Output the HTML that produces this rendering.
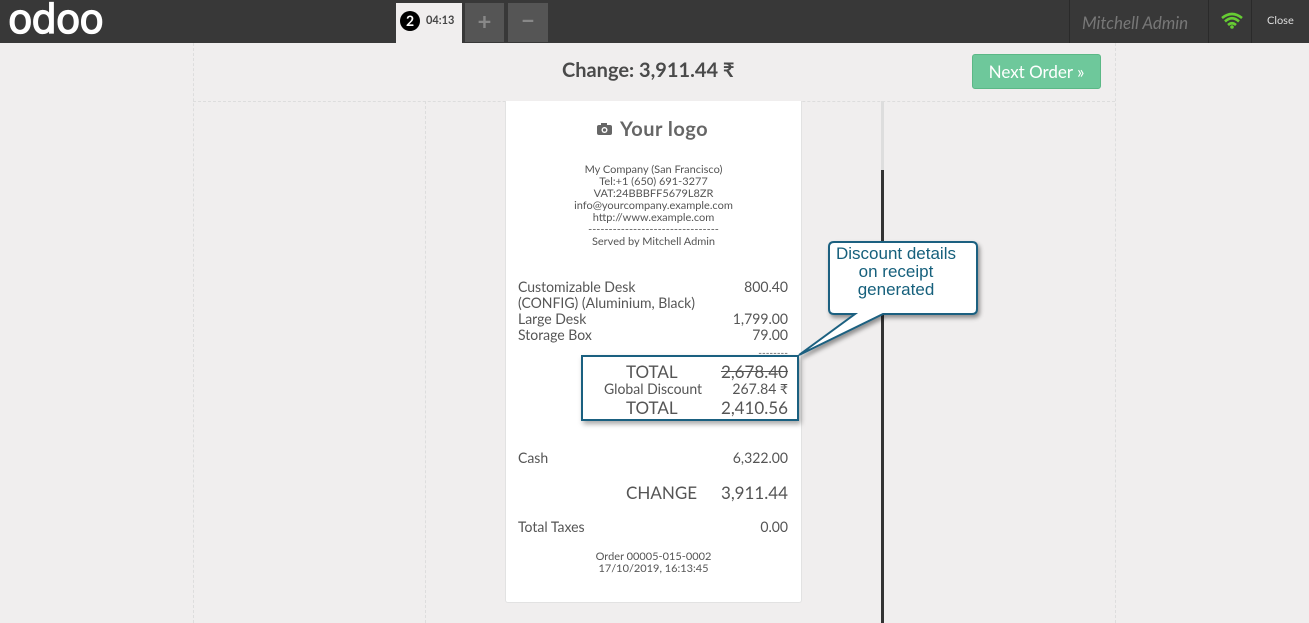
<!DOCTYPE html>
<html><head><meta charset="utf-8"><style>
*{margin:0;padding:0;box-sizing:border-box}
body{width:1309px;height:623px;overflow:hidden;background:#f0eeee;font-family:"Lato","Liberation Sans",sans-serif;position:relative;color:#555}
.a{position:absolute}
.top{left:0;top:0;width:1309px;height:43px;background:#383838}
.r{font-size:14px;color:#555;}
.rc{font-size:11px;color:#555;text-align:center;line-height:12px}
</style></head><body>
<div class="a top"></div>
<div class="a" style="left:8px;top:-3px;font-size:40px;color:#fff;font-weight:normal;letter-spacing:-1px;font-family:'DejaVu Sans',sans-serif;-webkit-text-stroke:1.2px #fff">odoo</div>
<div class="a" style="left:396px;top:3px;width:66px;height:40px;background:#f0eeee"></div>
<div class="a" style="left:400px;top:11px;width:20px;height:20px;border-radius:50%;background:#000;color:#fff;font-weight:bold;font-size:14px;text-align:center;line-height:20px">2</div>
<div class="a" style="left:426px;top:14px;font-size:11px;font-weight:bold;color:#444">04:13</div>
<div class="a" style="left:465px;top:3px;width:39px;height:39px;background:#555;color:#888;font-size:24px;text-align:center;line-height:38px;font-weight:bold">+</div>
<div class="a" style="left:508px;top:3px;width:40px;height:39px;background:#555;color:#888;font-size:24px;text-align:center;line-height:36px;font-weight:bold">−</div>
<div class="a" style="left:1069px;top:0;width:1px;height:43px;background:#2a2a2a"></div>
<div class="a" style="left:1208px;top:0;width:1px;height:43px;background:#2a2a2a"></div>
<div class="a" style="left:1251px;top:0;width:1px;height:43px;background:#2a2a2a"></div>
<div class="a" style="left:1082px;top:12px;font-size:17px;font-style:italic;color:#777">Mitchell Admin</div>
<svg class="a" style="left:1221px;top:12px" width="22" height="17" viewBox="0 0 22 17"><path d="M1 6Q11-2 21 6M4 9.5Q11 3 18 9.5M7 13Q11 9.5 15 13" stroke="#6c3" stroke-width="2.6" fill="none"/><circle cx="11" cy="15" r="1.8" fill="#6c3"/></svg>
<div class="a" style="left:1267px;top:14px;font-size:11px;color:#ddd">Close</div>

<div class="a" style="left:193px;top:43px;width:1px;height:580px;border-left:1px dashed #ddd"></div>
<div class="a" style="left:1115px;top:43px;width:1px;height:580px;border-left:1px dashed #ddd"></div>
<div class="a" style="left:193px;top:101px;width:922px;height:1px;border-top:1px dashed #ddd"></div>
<div class="a" style="left:425px;top:101px;width:1px;height:522px;border-left:1px dashed #ddd"></div>
<div class="a" style="left:562px;top:58px;font-size:20px;font-weight:bold;color:#4a4a4a">Change: 3,911.44 ₹</div>
<div class="a" style="left:972px;top:54px;width:129px;height:35px;background:#6ec89b;border:1px solid #5bb886;border-radius:3px;color:#fff;font-size:17px;text-align:center;line-height:33px">Next Order »</div>
<div class="a" style="left:881px;top:101px;width:3px;height:69px;background:#ddd"></div>
<div class="a" style="left:881px;top:170px;width:3px;height:453px;background:#333"></div>

<div class="a" style="left:505px;top:101px;width:297px;height:502px;background:#fff;border:1px solid #e2e2e2;border-top:none;border-radius:0 0 3px 3px"></div>
<svg class="a" style="left:596px;top:121px" width="17" height="15" viewBox="0 0 17 15"><rect x="1" y="4" width="15" height="10" rx="2" fill="#666"/><rect x="5" y="2" width="6" height="3" fill="#666"/><circle cx="8.5" cy="9" r="3" fill="#fff"/><circle cx="8.5" cy="9" r="1.6" fill="#666"/></svg>
<div class="a" style="left:620px;top:117px;font-size:20px;font-weight:bold;color:#666;letter-spacing:0.5px">Your logo</div>
<div class="a rc" style="left:505px;top:164px;width:297px">My Company (San Francisco)<br>Tel:+1 (650) 691-3277<br>VAT:24BBBFF5679L8ZR<br>info@yourcompany.example.com<br>http://www.example.com<br>--------------------------------<br>Served by Mitchell Admin</div>
<div class="a r" style="left:518px;top:279px;line-height:16px">Customizable Desk<br>(CONFIG) (Aluminium, Black)<br>Large Desk<br>Storage Box</div>
<div class="a r" style="left:680px;top:279px;width:108px;text-align:right;line-height:16px">800.40<br><br>1,799.00<br>79.00<br><span style="font-size:10px;line-height:12px">--------</span></div>
<div class="a" style="left:626px;top:361px;font-size:17px">TOTAL</div>
<div class="a" style="left:700px;top:361px;width:88px;text-align:right;font-size:17px;text-decoration:line-through">2,678.40</div>
<div class="a r" style="left:604px;top:380px">Global Discount</div>
<div class="a r" style="left:700px;top:380px;width:88px;text-align:right">267.84 ₹</div>
<div class="a" style="left:626px;top:397px;font-size:17px">TOTAL</div>
<div class="a" style="left:700px;top:397px;width:88px;text-align:right;font-size:17px">2,410.56</div>
<div class="a" style="left:581px;top:355px;width:218px;height:66px;border:2px solid #1a6080;box-shadow:2px 3px 5px rgba(0,0,0,.35)"></div>
<div class="a r" style="left:518px;top:449px">Cash</div>
<div class="a r" style="left:700px;top:449px;width:88px;text-align:right">6,322.00</div>
<div class="a" style="left:626px;top:482px;font-size:17px">CHANGE</div>
<div class="a" style="left:700px;top:482px;width:88px;text-align:right;font-size:17px">3,911.44</div>
<div class="a r" style="left:518px;top:518px">Total Taxes</div>
<div class="a r" style="left:700px;top:518px;width:88px;text-align:right">0.00</div>
<div class="a rc" style="left:505px;top:551px;width:297px">Order 00005-015-0002<br>17/10/2019, 16:13:45</div>

<svg class="a" style="left:795px;top:238px" width="190" height="125" viewBox="0 0 190 125">
<defs><filter id="s"><feDropShadow dx="2" dy="3" stdDeviation="2" flood-opacity=".4"/></filter></defs>
<path d="M39 4H177Q182 4 182 9V71Q182 76 177 76H88L4 117L60 76H39Q34 76 34 71V9Q34 4 39 4Z" fill="#fff" stroke="#1a6080" stroke-width="2" filter="url(#s)"/>
</svg>
<div class="a" style="left:830px;top:245px;width:132px;text-align:center;font-size:17px;line-height:18px;color:#16607c;font-family:'Liberation Sans',sans-serif">Discount details<br>on receipt<br>generated</div>
</body></html>
